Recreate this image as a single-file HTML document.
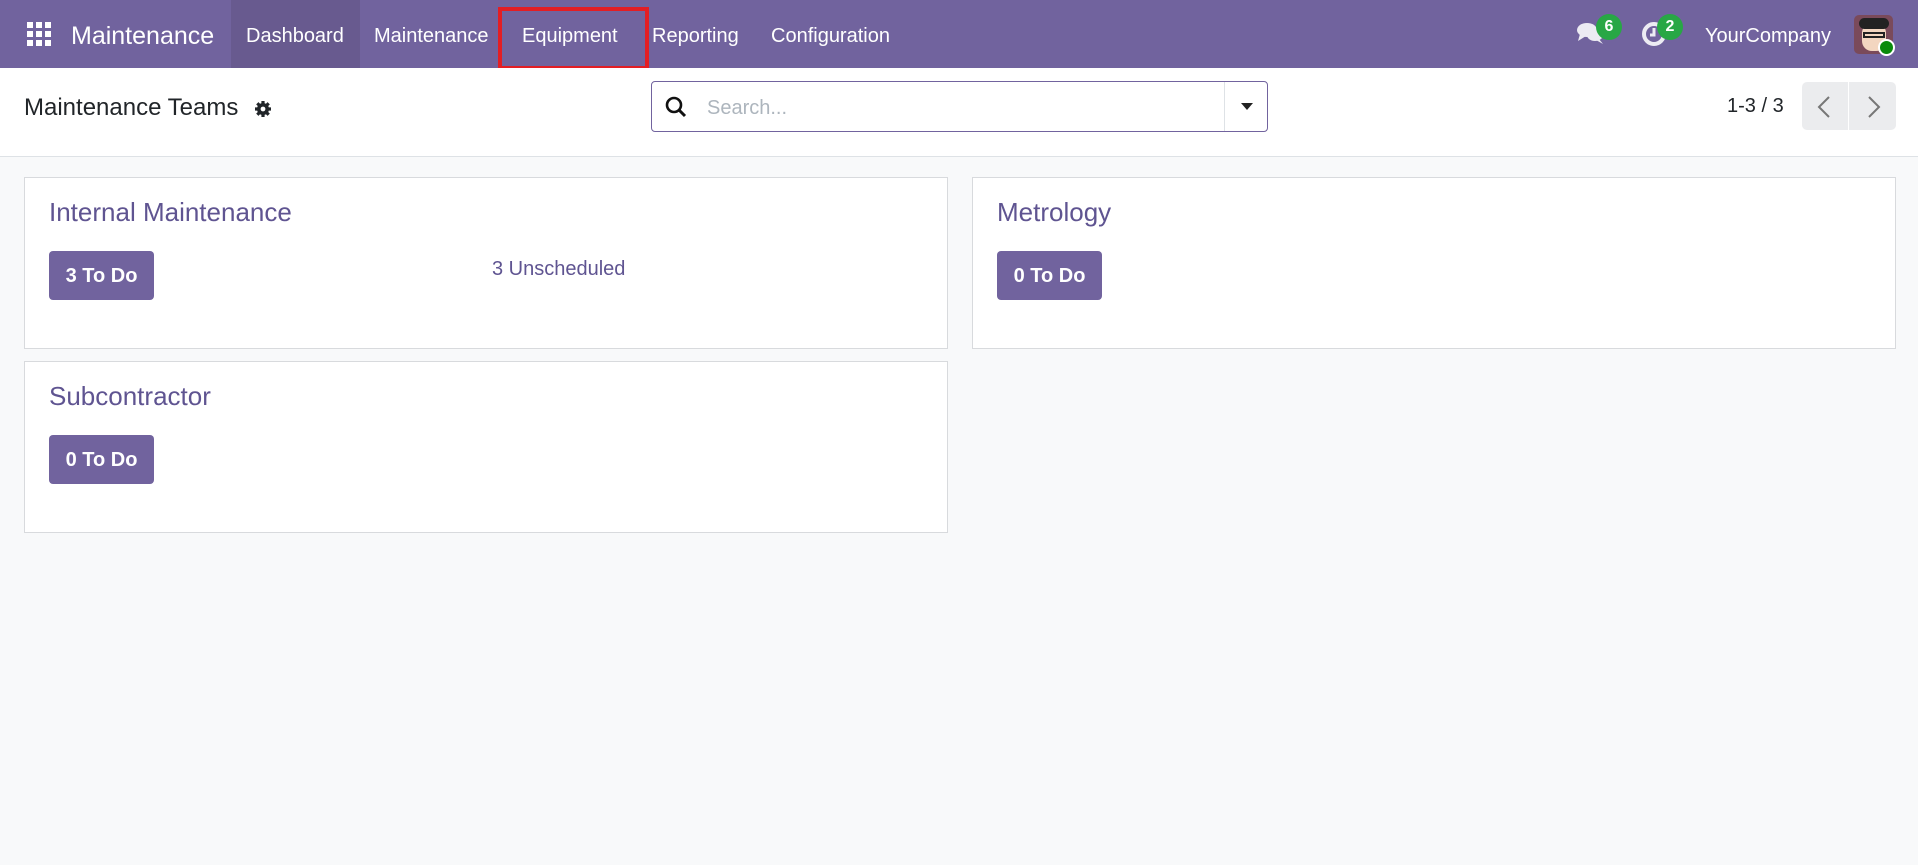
<!DOCTYPE html>
<html><head><meta charset="utf-8"><style>
*{box-sizing:border-box;margin:0;padding:0}
body{width:1918px;height:865px;background:#f8f9fa;font-family:"Liberation Sans",sans-serif;position:relative;overflow:hidden}
.nav{position:absolute;left:0;top:0;width:1918px;height:68px;background:#71639e;color:#fff}
.nav span{position:absolute;top:0;line-height:73px;font-size:20px;white-space:nowrap}
.cp{position:absolute;left:0;top:68px;width:1918px;height:89px;background:#fff;border-bottom:1px solid #dee2e6}
.card{position:absolute;background:#fff;border:1px solid #d8dadd;width:924px;height:172px}
.card .t{position:absolute;left:24px;top:19px;font-size:26px;color:#5f5491}
.btn{position:absolute;left:24px;top:73px;width:105px;height:49px;background:#71639e;border-radius:4px;color:#fff;font-weight:bold;font-size:20px;line-height:50px;text-align:center}
</style></head><body>
<div class="nav">
  <svg style="position:absolute;left:27px;top:22px" width="24" height="24" viewBox="0 0 24 24" fill="#fff">
    <rect x="0" y="0" width="6" height="6"/><rect x="9" y="0" width="6" height="6"/><rect x="18" y="0" width="6" height="6"/>
    <rect x="0" y="9" width="6" height="6"/><rect x="9" y="9" width="6" height="6"/><rect x="18" y="9" width="6" height="6"/>
    <rect x="0" y="18" width="6" height="6"/><rect x="9" y="18" width="6" height="6"/><rect x="18" y="18" width="6" height="6"/>
  </svg>
  <span style="left:71px;font-size:25px">Maintenance</span>
  <div style="position:absolute;left:231px;top:0;width:129px;height:68px;background:#685a8f"></div>
  <span style="left:246px">Dashboard</span>
  <span style="left:374px">Maintenance</span>
  <span style="left:522px">Equipment</span>
  <span style="left:652px">Reporting</span>
  <span style="left:771px">Configuration</span>
  <div style="position:absolute;left:498px;top:7px;width:151px;height:63px;border:4px solid #e31e24"></div>
  <svg style="position:absolute;left:1576px;top:20px" width="30" height="26" viewBox="0 0 30 26" fill="#ecebf3">
    <ellipse cx="11" cy="10" rx="10" ry="7"/><path d="M4 14 L2 21 L10 16Z"/>
    <ellipse cx="19" cy="15" rx="8" ry="6"/><path d="M23 19 L27 24 L20 20Z"/>
  </svg>
  <div style="position:absolute;left:1596px;top:14px;width:26px;height:26px;border-radius:13px;background:#28a745;color:#fff;font-weight:bold;font-size:16px;text-align:center;line-height:26px">6</div>
  <svg style="position:absolute;left:1641px;top:21px" width="26" height="26" viewBox="0 0 26 26">
    <circle cx="13" cy="13" r="10" fill="none" stroke="#ecebf3" stroke-width="4"/><path d="M13 7v7h-4" stroke="#ecebf3" stroke-width="3" fill="none"/>
  </svg>
  <div style="position:absolute;left:1657px;top:14px;width:26px;height:26px;border-radius:13px;background:#28a745;color:#fff;font-weight:bold;font-size:16px;text-align:center;line-height:26px">2</div>
  <span style="left:1705px;font-size:20px">YourCompany</span>
  <div style="position:absolute;left:1854px;top:15px;width:39px;height:39px;border-radius:5px;background:#7a4a5a;overflow:hidden">
    <div style="position:absolute;left:8px;top:8px;width:24px;height:28px;border-radius:10px;background:#f3d6c0"></div>
    <div style="position:absolute;left:5px;top:3px;width:30px;height:11px;border-radius:6px;background:#222"></div>
    <div style="position:absolute;left:9px;top:17px;width:22px;height:6px;border:2px solid #222"></div>
  </div>
  <div style="position:absolute;left:1878px;top:39px;width:17px;height:17px;border-radius:9px;background:#0a8a0a;border:2px solid #fff"></div>
</div>
<div class="cp">
  <div style="position:absolute;left:24px;top:26px;font-size:24px;color:#212529">Maintenance Teams</div>
  <svg style="position:absolute;left:254px;top:32px" width="18" height="18" viewBox="0 0 18 18"><circle cx="9" cy="9" r="6" fill="#212529"/><g stroke="#212529" stroke-width="3.2"><path d="M9 1v16M1 9h16M3.3 3.3l11.4 11.4M14.7 3.3L3.3 14.7"/></g><circle cx="9" cy="9" r="2.4" fill="#fff"/></svg>
  <div style="position:absolute;left:651px;top:13px;width:617px;height:51px;border:1px solid #71639e;border-radius:4px;background:#fff">
    <svg style="position:absolute;left:13px;top:14px" width="22" height="22" viewBox="0 0 22 22"><circle cx="9" cy="9" r="7" fill="none" stroke="#111" stroke-width="2.6"/><path d="M14 14l6 6" stroke="#111" stroke-width="3"/></svg>
    <div style="position:absolute;left:55px;top:15px;font-size:20px;color:#adb5bd">Search...</div>
    <div style="position:absolute;left:572px;top:0;width:1px;height:49px;background:#dee2e6"></div>
    <svg style="position:absolute;left:589px;top:21px" width="12" height="8" viewBox="0 0 12 8"><path d="M0 0h12L6 7z" fill="#222"/></svg>
  </div>
  <div style="position:absolute;left:1727px;top:27px;font-size:20px;color:#212529">1-3 / 3</div>
  <div style="position:absolute;left:1802px;top:14px;width:46px;height:48px;background:#ebecee;border-radius:5px 0 0 5px"></div>
  <div style="position:absolute;left:1849px;top:14px;width:47px;height:48px;background:#ebecee;border-radius:0 5px 5px 0"></div>
  <svg style="position:absolute;left:1817px;top:28px" width="14" height="22" viewBox="0 0 14 22"><path d="M12 1L2 11l10 10" stroke="#777" stroke-width="2" fill="none"/></svg>
  <svg style="position:absolute;left:1867px;top:28px" width="14" height="22" viewBox="0 0 14 22"><path d="M2 1l10 10L2 21" stroke="#777" stroke-width="2" fill="none"/></svg>
</div>
<div class="card" style="left:24px;top:177px"><div class="t">Internal Maintenance</div><div class="btn">3 To Do</div>
  <div style="position:absolute;left:467px;top:80px;font-size:20px;color:#5f5491">3 Unscheduled</div></div>
<div class="card" style="left:972px;top:177px"><div class="t">Metrology</div><div class="btn">0 To Do</div></div>
<div class="card" style="left:24px;top:361px"><div class="t">Subcontractor</div><div class="btn">0 To Do</div></div>
</body></html>
